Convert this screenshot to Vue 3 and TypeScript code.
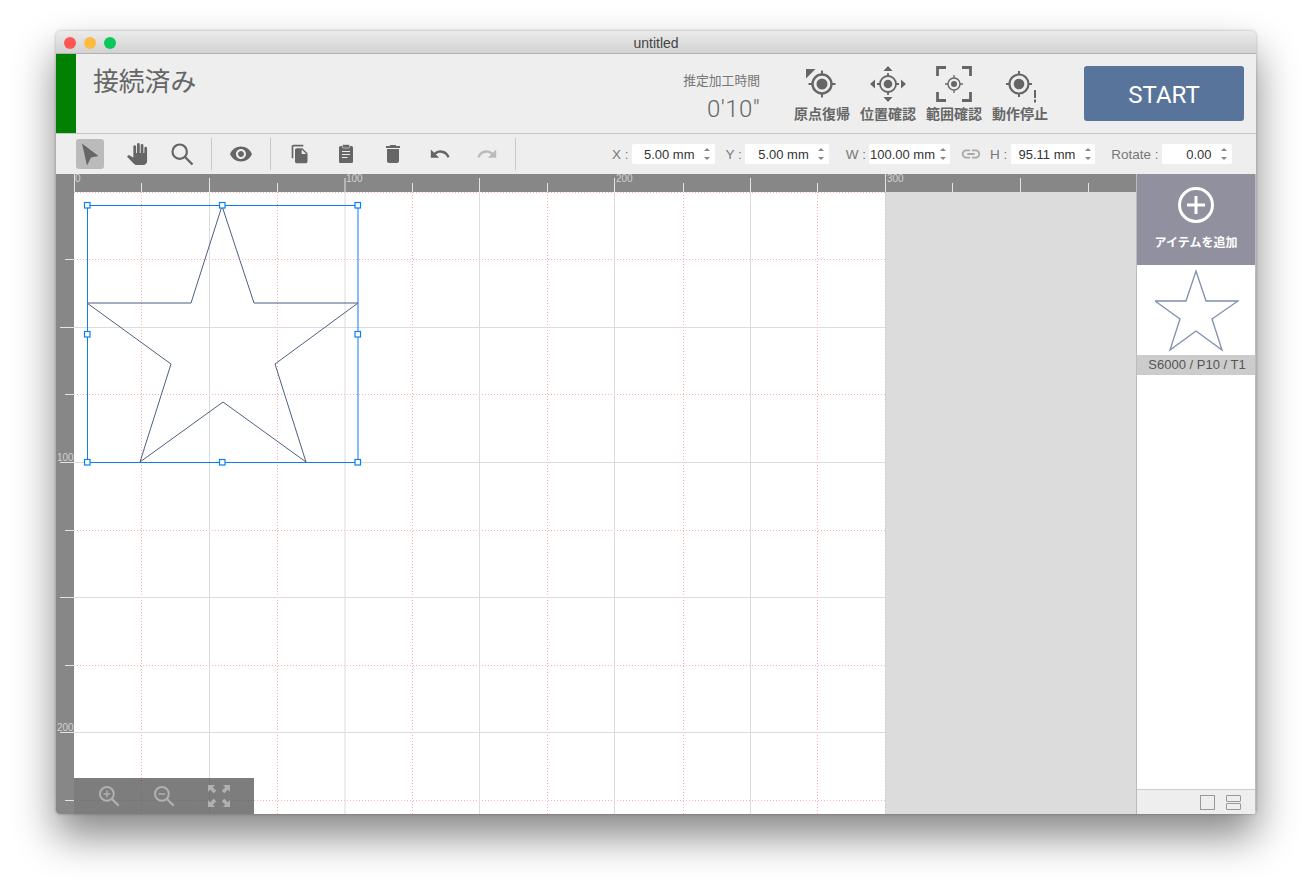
<script setup lang="ts">
const majorX = [209.5, 345, 479.5, 614.5, 750.5]
const minorX = [141.5, 277.5, 412.5, 547.5, 683.5, 817.5]
const majorY = [327.5, 462.5, 597.5, 732.5]
const minorY = [259.5, 394.5, 530.5, 665.5, 800.5]

const topTicks = [
  ...majorX.map((x) => ({ x, y: 178 })),
  ...minorX.map((x) => ({ x, y: 183 })),
  { x: 74.5, y: 174 },
  { x: 885.5, y: 174 },
  { x: 952.5, y: 183 },
  { x: 1020.5, y: 178 },
  { x: 1088.5, y: 183 },
]
const topLabels = [
  { x: 75, t: '0' },
  { x: 346, t: '100' },
  { x: 616, t: '200' },
  { x: 887, t: '300' },
]

const star = '222,206 254,303 358,303 275,364 306,462 223,402 140,462 171,364 87,303 191,303'
const thumbStar =
  '41,6 51,36 83,36 57,54 67,85 41,66 15,85 25,54 0,36 31,36'
// top-left corner of each selection handle
const handles = [
  [84.5, 202.5],
  [219.5, 202.5],
  [355, 202.5],
  [84.5, 331.5],
  [355, 331.5],
  [84.5, 459.5],
  [219.5, 459.5],
  [355, 459.5],
]

const fields = [
  { label: 'X :', value: '5.00 mm', width: 83, gap: 0, labelGap: 3, pad: 20 },
  { label: 'Y :', value: '5.00 mm', width: 84, gap: 11, labelGap: 3, pad: 20 },
  { label: 'W :', value: '100.00 mm', width: 81, gap: 17, labelGap: 3, pad: 15 },
]
</script>

<template>
  <div class="window">
    <div class="titlebar">
      <div class="lights">
        <span class="light red"></span>
        <span class="light yellow"></span>
        <span class="light green"></span>
      </div>
      <span class="title">untitled</span>
    </div>

    <header class="header">
      <div class="status-bar"></div>
      <div class="status-text">接続済み</div>
      <div class="time">
        <div class="time-label">推定加工時間</div>
        <div class="time-value">0′10″</div>
      </div>
      <div class="actions">
        <button class="action">
          <svg width="40" height="40" viewBox="0 0 40 40" fill="none" stroke="#666">
            <path d="M4 5h9.500L4 14.500z" fill="#666" stroke="none" />
            <circle cx="20" cy="20" r="9.500" stroke-width="2.400" />
            <circle cx="20" cy="20" r="5.500" fill="#666" stroke="none" />
            <path d="M20 6.500v4M20 29.500v4M6.500 20h4M29.500 20h4" stroke-width="2" />
          </svg>
          <span>原点復帰</span>
        </button>
        <button class="action">
          <svg width="40" height="40" viewBox="0 0 40 40" fill="none" stroke="#666">
            <path d="M20 2l4.500 5h-9zM20 38l4.500-5h-9zM2 20l5-4.500v9zM38 20l-5-4.500v9z" fill="#666" stroke="none" />
            <circle cx="20" cy="20" r="8" stroke-width="1.800" />
            <circle cx="20" cy="20" r="4.300" fill="#666" stroke="none" />
            <path d="M20 9v3M20 28v3M9 20h3M28 20h3" stroke-width="1.800" />
          </svg>
          <span>位置確認</span>
        </button>
        <button class="action">
          <svg width="40" height="40" viewBox="0 0 40 40" fill="none" stroke="#666">
            <path d="M3.500 12V3.500H12M28 3.500h8.500V12M3.500 28v8.500H12M28 36.500h8.500V28" stroke-width="2.800" />
            <circle cx="20" cy="20" r="6" stroke-width="1.400" />
            <circle cx="20" cy="20" r="3" fill="#666" stroke="none" />
            <path d="M20 11v3M20 26v3M11 20h3M26 20h3" stroke-width="1.300" />
          </svg>
          <span>範囲確認</span>
        </button>
        <button class="action">
          <svg width="40" height="40" viewBox="0 0 40 40" fill="none" stroke="#666">
            <circle cx="19" cy="20" r="9.500" stroke-width="2.200" />
            <circle cx="19" cy="20" r="5.300" fill="#666" stroke="none" />
            <path d="M19 7v4M19 29v4M6 20h4M28 20h4" stroke-width="2" />
            <path d="M35 26v8M35 35.500v3" stroke-width="2" />
          </svg>
          <span>動作停止</span>
        </button>
      </div>
      <button class="start">START</button>
    </header>

    <div class="toolbar">
      <div class="tool active">
        <svg width="24" height="24" viewBox="0 0 24 24"><path d="M4 1.500l16.500 12.500-7.500 1.500-4 8z" fill="#666" /></svg>
      </div>
      <div class="tool hand">
        <svg width="22" height="22" viewBox="0 0 24 24"><path fill="#666" d="M23 5.500V20c0 2.200-1.800 4-4 4h-7.300c-1.080 0-2.100-.43-2.850-1.190L1 14.830s1.260-1.230 1.300-1.250c.22-.19.49-.29.79-.29.22 0 .42.06.6.16.04.01 4.310 2.460 4.310 2.460V4c0-.83.67-1.500 1.500-1.500S11 3.170 11 4v7h1V1.500c0-.83.67-1.500 1.500-1.500S15 .67 15 1.500V11h1V2.500c0-.83.67-1.500 1.500-1.500s1.500.67 1.500 1.500V11h1V5.500c0-.83.67-1.500 1.500-1.500s1.500.67 1.500 1.500z" /></svg>
      </div>
      <div class="tool search">
        <svg width="24" height="24" viewBox="0 0 24 24" fill="none" stroke="#666">
          <circle cx="9.700" cy="9.700" r="7.200" stroke-width="2.200" />
          <path d="M15 15l7.500 7.500" stroke-width="2.400" />
        </svg>
      </div>
      <div class="divider first"></div>
      <div class="tool eye">
        <svg width="24" height="24" viewBox="0 0 24 24"><path fill="#666" d="M12 4.500C7 4.500 2.730 7.610 1 12c1.730 4.390 6 7.500 11 7.500s9.270-3.110 11-7.500c-1.730-4.390-6-7.500-11-7.500zM12 17c-2.760 0-5-2.240-5-5s2.240-5 5-5 5 2.240 5 5-2.240 5-5 5zm0-8c-1.660 0-3 1.340-3 3s1.340 3 3 3 3-1.340 3-3-1.340-3-3-3z" /></svg>
      </div>
      <div class="divider second"></div>
      <div class="tool copy">
        <svg width="20" height="20" viewBox="0 0 24 24"><path fill="#666" d="M16 1H4c-1.100 0-2 .9-2 2v14h2V3h12V1zm-1 4l6 6v10c0 1.100-.9 2-2 2H7.990C6.890 23 6 22.100 6 21l.01-14c0-1.100.89-2 1.990-2h7zm-1 7h5.500L14 6.500V12z" /></svg>
      </div>
      <div class="tool paste">
        <svg width="16" height="20" viewBox="0 0 16 20">
          <rect x="1" y="2" width="14" height="17" rx="1.500" fill="#666" />
          <rect x="4.500" y="0.500" width="7" height="3.500" rx="1" fill="#666" stroke="#eee" stroke-width="0.600" />
          <path d="M4 7.500h8M4 10.500h8M4 13.500h5.500" stroke="#eee" stroke-width="1" />
        </svg>
      </div>
      <div class="tool trash">
        <svg width="24" height="24" viewBox="0 0 24 24"><path fill="#666" d="M6 19c0 1.100.9 2 2 2h8c1.100 0 2-.9 2-2V7H6v12zM19 4h-3.500l-1-1h-5l-1 1H5v2h14V4z" /></svg>
      </div>
      <div class="tool undo">
        <svg width="22" height="22" viewBox="0 0 24 24"><path fill="#666" d="M12.500 8c-2.650 0-5.050.99-6.900 2.600L2 7v9h9l-3.620-3.620c1.390-1.160 3.160-1.880 5.120-1.880 3.540 0 6.550 2.310 7.600 5.500l2.370-.78C21.080 11.030 17.150 8 12.500 8z" /></svg>
      </div>
      <div class="tool redo">
        <svg width="22" height="22" viewBox="0 0 24 24"><path fill="#bbb" d="M18.400 10.600C16.550 8.990 14.150 8 11.500 8c-4.650 0-8.580 3.030-9.960 7.220L3.900 16c1.050-3.190 4.050-5.500 7.600-5.500 1.950 0 3.730.72 5.120 1.880L13 16h9V7l-3.600 3.600z" /></svg>
      </div>
      <div class="divider third"></div>

      <div class="fields">
        <div
          v-for="f in fields"
          :key="f.label"
          class="field"
          :style="{ marginLeft: f.gap + 'px', gap: f.labelGap + 'px' }"
        >
          <label>{{ f.label }}</label>
          <div class="input" :style="{ width: f.width + 'px', paddingRight: f.pad + 'px' }">
            <span>{{ f.value }}</span>
            <i class="stepper"></i>
          </div>
        </div>
        <svg class="link" width="22" height="22" viewBox="0 0 24 24"><path fill="#aaa" d="M3.900 12c0-1.710 1.390-3.100 3.100-3.100h4V7H7c-2.760 0-5 2.240-5 5s2.240 5 5 5h4v-1.900H7c-1.710 0-3.100-1.390-3.100-3.100zM8 13h8v-2H8v2zm9-6h-4v1.900h4c1.710 0 3.100 1.390 3.100 3.100s-1.390 3.100-3.100 3.100h-4V17h4c2.760 0 5-2.240 5-5s-2.240-5-5-5z" /></svg>
        <div class="field h-field">
          <label>H :</label>
          <div class="input h-input">
            <span>95.11 mm</span>
            <i class="stepper"></i>
          </div>
        </div>
        <div class="field rotate-field">
          <label>Rotate :</label>
          <div class="input rotate-input">
            <span>0.00</span>
            <i class="stepper"></i>
          </div>
        </div>
      </div>
    </div>

    <div class="main">
      <div class="stage">
        <svg class="stage-svg" width="1080" height="640" viewBox="56 174 1080 640">
          <rect x="56" y="174" width="1080" height="640" fill="#dcdcdc" />
          <rect x="74" y="192" width="811" height="622" fill="#fff" />

          <g stroke="#ffb0b0" stroke-dasharray="1 2">
            <line v-for="x in minorX" :key="x" :x1="x" y1="192" :x2="x" y2="814" />
            <line v-for="y in minorY" :key="y" x1="74" :y1="y" x2="885" :y2="y" />
            <line x1="74" y1="192.500" x2="885" y2="192.500" />
          </g>
          <g stroke="#dcdcdc">
            <line v-for="x in majorX" :key="x" :x1="x" y1="192" :x2="x" y2="814" />
            <line v-for="y in majorY" :key="y" x1="74" :y1="y" x2="885" :y2="y" />
          </g>
          <line x1="885.500" y1="192" x2="885.500" y2="814" stroke="#c8c8c8" stroke-dasharray="1 2" />

          <rect x="56" y="174" width="1080" height="18" fill="#878787" />
          <rect x="56" y="174" width="18" height="640" fill="#878787" />
          <g stroke="#e4e4e4">
            <line v-for="t in topTicks" :key="t.x" :x1="t.x" :y1="t.y" :x2="t.x" y2="192" />
            <line v-for="y in minorY" :key="y" x1="65" :y1="y" x2="74" :y2="y" />
            <line v-for="y in majorY" :key="y" x1="60" :y1="y" x2="74" :y2="y" />
          </g>
          <text v-for="l in topLabels" :key="l.t" :x="l.x" y="182" class="ruler-label">{{ l.t }}</text>
          <text x="57" y="461" class="ruler-label">100</text>
          <text x="57" y="731" class="ruler-label">200</text>

          <polygon :points="star" fill="none" stroke="#4d5f7f" stroke-width="1" />
          <rect x="87.500" y="205.500" width="270.500" height="257" fill="none" stroke="#0f7cf0" stroke-width="1" />
          <rect
            v-for="h in handles"
            :key="h.join()"
            :x="h[0]"
            :y="h[1]"
            width="5.500"
            height="5.500"
            fill="#fff"
            stroke="#0b7ff5"
            stroke-width="1.200"
          />
        </svg>

        <div class="zoom-bar">
          <div class="zoom-btn">
            <svg width="22" height="22" viewBox="0 0 24 24" fill="none" stroke="#b0b0b0">
              <circle cx="9.700" cy="9.700" r="7.500" stroke-width="2.200" />
              <path d="M15 15l7.500 7.500" stroke-width="2.400" />
              <path d="M9.700 6v7.400M6 9.700h7.400" stroke-width="1.600" />
            </svg>
          </div>
          <div class="zoom-btn">
            <svg width="22" height="22" viewBox="0 0 24 24" fill="none" stroke="#b0b0b0">
              <circle cx="9.700" cy="9.700" r="7.500" stroke-width="2.200" />
              <path d="M15 15l7.500 7.500" stroke-width="2.400" />
              <path d="M6 9.700h7.400" stroke-width="1.600" />
            </svg>
          </div>
          <div class="zoom-btn">
            <svg width="26" height="26" viewBox="0 0 26 26" fill="#b0b0b0">
              <path d="M2 2h7L6.800 4.200l3.500 3.500-2.600 2.600-3.500-3.500L2 9zM24 2v7l-2.200-2.200-3.500 3.500-2.600-2.600 3.500-3.500L17 2zM2 24v-7l2.200 2.200 3.500-3.500 2.600 2.600-3.500 3.500L9 24zM24 24h-7l2.200-2.200-3.500-3.500 2.600-2.600 3.500 3.500L24 17z" />
            </svg>
          </div>
        </div>
      </div>

      <aside class="sidebar">
        <button class="add-item">
          <svg width="38" height="38" viewBox="0 0 38 38" fill="none" stroke="#fff">
            <circle cx="19" cy="19" r="16.500" stroke-width="3" />
            <path d="M19 10v18M10 19h18" stroke-width="3" />
          </svg>
          <span>アイテムを追加</span>
        </button>
        <div class="item">
          <svg width="84" height="90" viewBox="0 0 84 90">
            <polygon :points="thumbStar" fill="none" stroke="#7e90ad" stroke-width="1.300" />
          </svg>
          <div class="item-label">S6000 / P10 / T1</div>
        </div>
        <div class="side-footer">
          <span class="view-single"></span>
          <span class="view-split"><i></i><i></i></span>
        </div>
      </aside>
    </div>
  </div>
</template>

<style scoped>
.window {
  position: relative;
  width: 1200px;
  height: 783px;
  margin-left: 56px;
  border-radius: 5px 5px 4px 4px;
  overflow: hidden;
  background: #eee;
  font-family: "Liberation Sans", "Noto Sans CJK JP", sans-serif;
  box-sizing: border-box;
  display: flex;
  flex-direction: column;
  box-shadow: 0 22px 42px rgba(0, 0, 0, 0.48), 0 0 3px rgba(0, 0, 0, 0.3);
}
.titlebar {
  position: relative;
  height: 23px;
  flex: none;
  box-sizing: border-box;
  display: flex;
  align-items: center;
  justify-content: center;
  padding-top: 2px;
  background: linear-gradient(#ebebeb, #d2d2d2);
  border-bottom: 1px solid #b2b2b2;
}
.lights {
  position: absolute;
  left: 8px;
  top: 6px;
  display: flex;
  gap: 8px;
}
.light {
  width: 12px;
  height: 12px;
  border-radius: 50%;
}
.red { background: #fc5753; }
.yellow { background: #fdbc40; }
.green { background: #0cc75a; }
.title {
  font-size: 14px;
  line-height: 16px;
  color: #444;
}
.header {
  flex: none;
  height: 80px;
  box-sizing: border-box;
  display: flex;
  background: #eee;
  border-bottom: 1px solid #c4c4c4;
}
.status-bar {
  width: 20px;
  background: #008000;
}
.status-text {
  margin: 10px auto 0 17px;
  font-size: 25.800px;
  line-height: 32px;
  color: #666;
  font-family: "Noto Sans CJK JP", sans-serif;
}
.time {
  text-align: right;
  color: #666;
}
.time-label {
  margin-top: 17px;
  font-size: 12.800px;
  line-height: 17px;
  color: #777;
  font-family: "Noto Sans CJK JP", sans-serif;
}
.time-value {
  margin-top: 7px;
  font-size: 24px;
  line-height: 28px;
  letter-spacing: 0.4px;
  font-family: Roboto, sans-serif;
  font-weight: 300;
}
.actions {
  display: flex;
  margin-left: 29px;
}
.action {
  width: 66px;
  padding: 10px 0 0;
  border: 0;
  background: none;
  display: flex;
  flex-direction: column;
  align-items: center;
  color: #666;
  font-size: 14px;
  line-height: 18px;
  font-weight: 700;
  font-family: "Noto Sans CJK JP", sans-serif;
}
.action svg {
  display: block;
  flex: none;
}
.start {
  width: 160px;
  height: 55px;
  margin: 12px 12px 0 31px;
  padding: 2px 0 0;
  border: 0;
  border-radius: 3px;
  background: #58749b;
  color: #fff;
  font-size: 24px;
  font-family: Roboto, sans-serif;
}
.toolbar {
  flex: none;
  height: 40px;
  display: flex;
  align-items: center;
  background: #eee;
  position: relative;
}
.tool {
  display: flex;
  align-items: center;
  justify-content: center;
  width: 28px;
  height: 30px;
  border-radius: 3px;
}
.tool.active {
  margin-left: 20px;
  background: #bbb;
}
.hand { margin-left: 19px; }
.search { margin-left: 17px; }
.eye { margin-left: 15px; }
.copy { margin-left: 15px; }
.paste { margin-left: 18px; }
.trash { margin-left: 19px; }
.undo { margin-left: 19px; }
.redo { margin-left: 19px; }
.divider {
  width: 1px;
  height: 32px;
  background: #c8c8c8;
}
.divider.first { margin-left: 15px; }
.divider.second { margin-left: 15px; }
.divider.third { margin-left: 14px; }
.fields {
  display: flex;
  align-items: center;
  margin-left: 96px;
}
.field {
  display: flex;
  align-items: center;
  gap: 4px;
}
.field label {
  font-size: 13.500px;
  color: #777;
  white-space: nowrap;
}
.input {
  position: relative;
  box-sizing: border-box;
  height: 20px;
  display: flex;
  align-items: center;
  justify-content: flex-end;
  padding-right: 20px;
  background: #fff;
  border-radius: 2px;
  font-size: 13px;
  color: #333;
  white-space: nowrap;
}
.stepper {
  position: absolute;
  right: 3px;
  top: 3px;
  width: 9px;
  height: 14px;
}
.stepper::before,
.stepper::after {
  content: "";
  position: absolute;
  left: 1.500px;
  border-left: 3px solid transparent;
  border-right: 3px solid transparent;
}
.stepper::before {
  top: 1px;
  border-bottom: 3.500px solid #888;
}
.stepper::after {
  bottom: 1px;
  border-top: 3.500px solid #888;
}
.link {
  margin: 0 8px 0 10px;
}
.h-input { width: 84px; }
.rotate-field { margin-left: 16px; gap: 3px; }
.rotate-input { width: 70px; }
.main {
  flex: 1;
  min-height: 0;
  display: flex;
}
.stage {
  position: relative;
  flex: 1;
  min-width: 0;
}
.stage-svg {
  display: block;
}
.ruler-label {
  font-size: 10px;
  fill: #d2d2d2;
  font-family: "Liberation Sans", sans-serif;
}
.zoom-bar {
  position: absolute;
  left: 18px;
  bottom: 0;
  width: 180px;
  height: 36px;
  box-sizing: border-box;
  padding-left: 7px;
  display: flex;
  align-items: center;
  background: rgba(88, 88, 88, 0.78);
}
.zoom-btn {
  width: 55px;
  display: flex;
  justify-content: center;
}
.sidebar {
  width: 120px;
  flex: none;
  box-sizing: border-box;
  display: flex;
  flex-direction: column;
  background: #fff;
  border-left: 1px solid #bbb;
  border-right: 1px solid #bbb;
}
.add-item {
  height: 91px;
  flex: none;
  padding: 12px 0 0;
  border: 0;
  display: flex;
  flex-direction: column;
  align-items: center;
  gap: 10px;
  background: #90909e;
  color: #fff;
  font-size: 12px;
  line-height: 16px;
  font-weight: 700;
  font-family: "Noto Sans CJK JP", sans-serif;
}
.add-item svg {
  flex: none;
}
.item {
  flex: 1;
  display: flex;
  flex-direction: column;
  align-items: center;
}
.item svg {
  display: block;
  flex: none;
  margin-left: 2px;
}
.item-label {
  width: 100%;
  box-sizing: border-box;
  padding-left: 2px;
  height: 20px;
  line-height: 20px;
  background: #ccc;
  color: #555;
  font-size: 13px;
  text-align: center;
}
.side-footer {
  height: 25px;
  flex: none;
  box-sizing: border-box;
  display: flex;
  align-items: center;
  justify-content: flex-end;
  gap: 11px;
  padding-right: 14px;
  background: #eee;
  border-top: 1px solid #ccc;
}
.view-single {
  width: 15px;
  height: 15px;
  box-sizing: border-box;
  border: 1.500px solid #999;
}
.view-split {
  width: 15px;
  height: 15px;
  display: flex;
  flex-direction: column;
  gap: 1px;
}
.view-split i {
  flex: 1;
  border: 1.500px solid #999;
  border-radius: 1px;
}
</style>

<style>
html,
body {
  margin: 0;
  height: 100%;
  background: #fff;
}
body {
  box-sizing: border-box;
  padding-top: 31px;
}
</style>
